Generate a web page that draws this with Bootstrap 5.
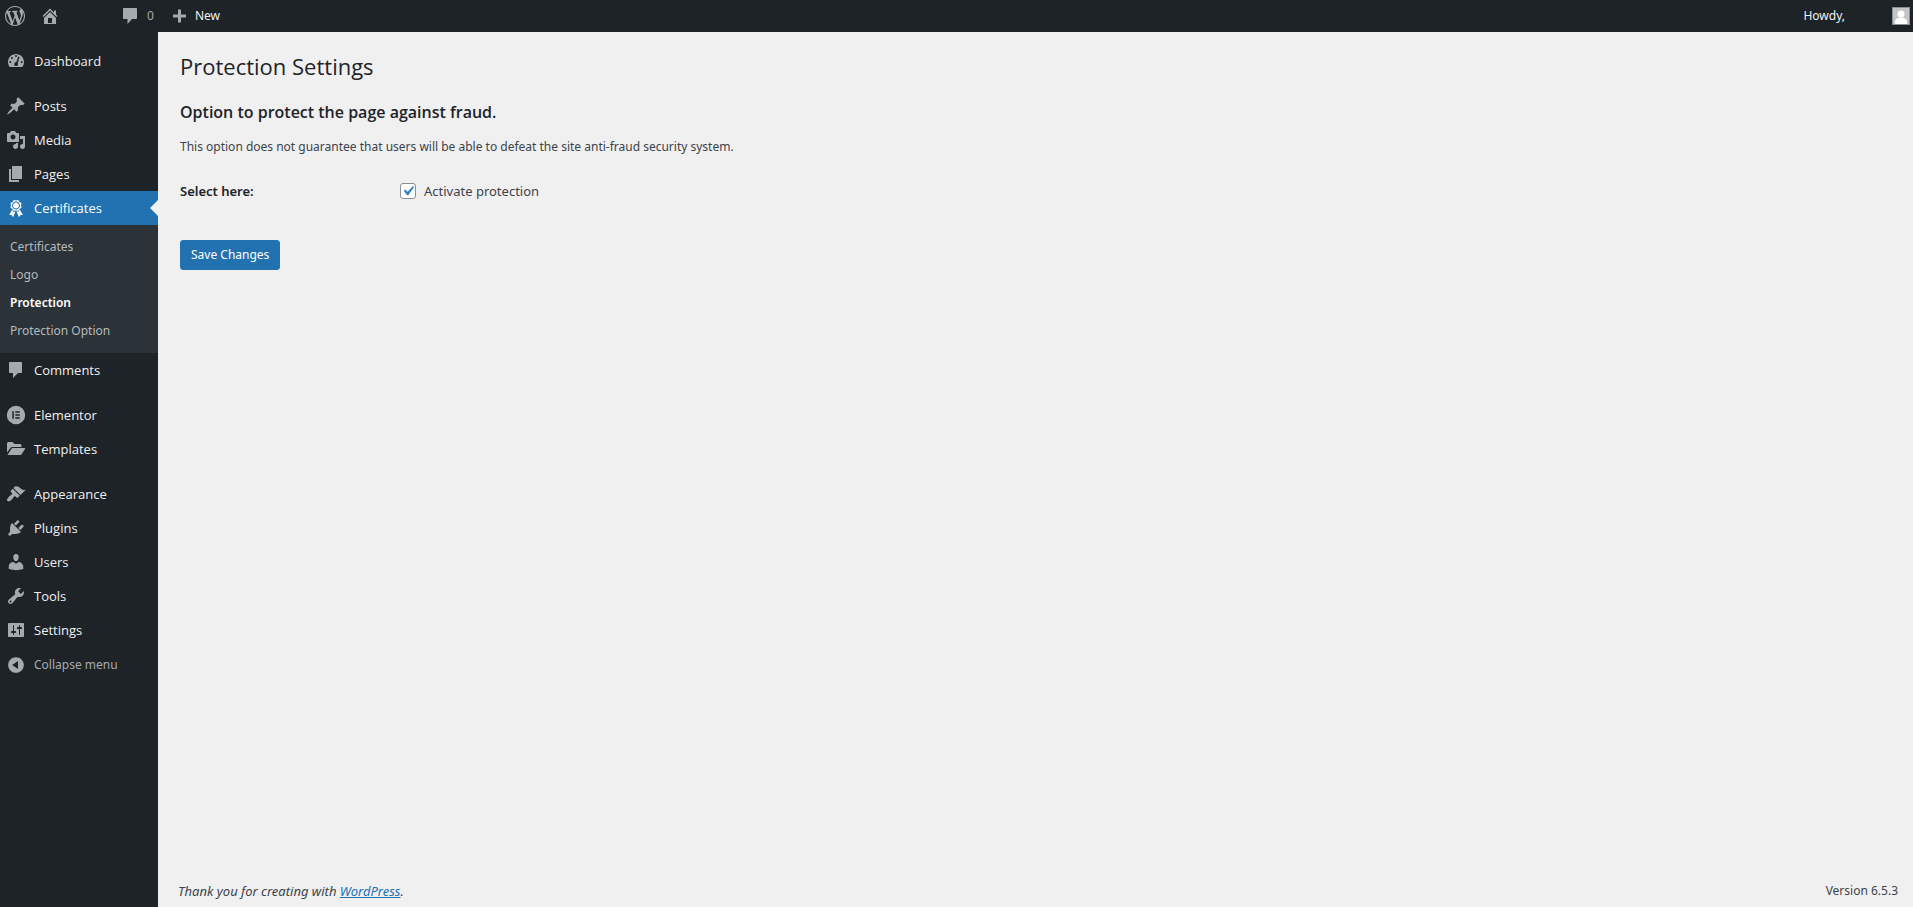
<!DOCTYPE html>
<html lang="en">
<head>
<meta charset="utf-8">
<meta name="viewport" content="width=device-width, initial-scale=1">
<title>Protection Settings</title>
<link href="https://cdn.jsdelivr.net/npm/bootstrap@5.3.0/dist/css/bootstrap.min.css" rel="stylesheet">
<style>
  body { background: #f0f0f1; color: #3c434a; font: 12px/18px "Noto Sans", "Open Sans", sans-serif; }
  a { color: #2271b1; }
  h1, h2, .sidemenu { font-family: "Open Sans", "Noto Sans", sans-serif; }
  .ico { width: 20px; height: 20px; fill: #a7aaad; flex: none; }

  /* Top toolbar */
  .adminbar { height: 32px; background: #1d2327; font-size: 12px; color: #f0f0f1; padding-left: 5px; }
  .adminbar a { color: inherit; text-decoration: none; display: flex; align-items: center; height: 32px; }
  .adminbar .site { margin-left: 15px; }
  .adminbar .replies { margin-left: 60px; gap: 7px; color: #a7aaad; }
  .adminbar .create { margin-left: 15px; gap: 6px; }
  .adminbar .account { gap: 47px; padding-right: 3px; }
  .avatar { width: 18px; height: 18px; background: #c3c4c7; border: 1px solid #8c8f94; }

  /* Side menu */
  .sidemenu { width: 158px; flex: none; background: #1d2327; padding-top: 12px; font-size: 13px; }
  .sidemenu .nav-link { display: flex; align-items: center; gap: 8px; width: 100%; height: 34px; padding: 0 0 0 6px; color: #f0f0f1; border: 0; background: none; text-align: left; }
  .sidemenu .gap-above { margin-top: 11px; }
  .sidemenu .nav-link.current { background: #2271b1; color: #fff; position: relative; }
  .sidemenu .nav-link.current .ico { fill: #fff; }
  .sidemenu .nav-link.current::after { content: ""; position: absolute; right: 0; top: 9px; border: 8px solid transparent; border-right-color: #f0f0f1; }
  .sidemenu .collapse-menu { color: #a7aaad; font: 12px/18px "Noto Sans", "Open Sans", sans-serif; height: 36px; }
  .submenu { background: #2c3338; padding: 8px 0; font: 12px/18px "Noto Sans", "Open Sans", sans-serif; }
  .submenu a { display: block; height: 28px; line-height: 28px; padding-left: 10px; color: #b4b9be; text-decoration: none; }
  .submenu a.chosen { color: #fff; font-weight: 600; }

  /* Settings form */
  .content { padding: 20px 15px 7px 20px; }
  main { padding-left: 2px; }
  h1 { font-size: 22px; line-height: 28px; font-weight: 400; color: #1d2327; margin: 0 0 20px; }
  h2 { font-size: 16px; line-height: 24px; font-weight: 600; color: #1d2327; margin: 0 0 14px; }
  .field-name { width: 220px; font-size: 13px; font-weight: 600; color: #1d2327; }
  .settings-row { margin-top: 26px; }
  .form-check-input { width: 16px; height: 16px; margin: 0; border: 1px solid #8c8f94; border-radius: 4px; background-color: #fff; }
  .form-check-input:checked { background-color: #fff; border-color: #8c8f94; background-size: 20px; background-image: url("data:image/svg+xml,%3Csvg xmlns='http://www.w3.org/2000/svg' viewBox='0 0 20 20'%3E%3Cpath d='M14.83 4.89l1.34.94-5.81 8.38H9.02L5.78 9.67l1.34-1.25 2.57 2.4z' fill='%233582c4'/%3E%3C/svg%3E"); }
  .check-label { font-size: 13px; }
  .btn-save { --bs-btn-bg: #2271b1; --bs-btn-border-color: #2271b1; margin-top: 40px; height: 30px; padding: 0 10px; font-size: 12px; line-height: 28px; border-radius: 3px; }
  .thanks { font-size: 13px; font-style: italic; }
</style>
</head>
<body>
<div class="d-flex flex-column min-vh-100">
  <header class="adminbar d-flex align-items-center">
    <a href="#" aria-label="About WordPress"><svg class="ico" viewBox="0 0 20 20"><path d="M20 10c0-5.51-4.49-10-10-10C4.48 0 0 4.49 0 10c0 5.52 4.48 10 10 10 5.51 0 10-4.48 10-10zM7.78 15.37L4.37 6.22c.55-.02 1.17-.08 1.17-.08.5-.06.44-1.13-.06-1.11 0 0-1.45.11-2.37.11-.18 0-.37 0-.58-.01C4.12 2.69 6.87 1.11 10 1.11c2.33 0 4.45.87 6.05 2.34-.68-.11-1.65.39-1.65 1.58 0 .74.45 1.36.9 2.1.35.61.55 1.36.55 2.46 0 1.49-1.4 5-1.4 5l-3.03-8.37c.54-.02.82-.17.82-.17.5-.05.44-1.25-.06-1.22 0 0-1.44.12-2.38.12-.87 0-2.33-.12-2.33-.12-.5-.03-.56 1.2-.06 1.22l.92.08 1.26 3.41zM17.41 10c.24-.64.74-1.87.43-4.25.7 1.29 1.05 2.71 1.05 4.25 0 3.29-1.73 6.24-4.4 7.78.97-2.59 1.94-5.2 2.92-7.78zM6.1 18.09C3.12 16.65 1.11 13.53 1.11 10c0-1.3.23-2.48.72-3.59C3.25 10.3 4.67 14.2 6.1 18.09zm4.03-6.63l2.58 6.98c-.86.29-1.76.45-2.71.45-.79 0-1.57-.11-2.29-.33.81-2.38 1.62-4.74 2.42-7.1z"/></svg></a>
    <a href="#" class="site" aria-label="Visit site"><svg class="ico" viewBox="0 0 20 20"><path fill-rule="evenodd" d="M16 8.5l1.53 1.53-1.06 1.06L10 4.6l-6.47 6.49-1.06-1.06L10 2.5l4 4v-2h2v4zm-6-2.46l6 5.99V18H4v-5.97zM12 17v-5H8v5h4z"/></svg></a>
    <a href="#" class="replies"><svg class="ico" viewBox="0 0 20 20"><path d="M4 2h12c.7 0 1 .4 1 1v9c0 .7-.4 1-1 1h-4l-4.500 5v-5H4c-.7 0-1-.4-1-1V3c0-.7.4-1 1-1z"/></svg>0</a>
    <a href="#" class="create"><svg class="ico" viewBox="0 0 20 20"><path d="M17 8.500v3h-5v5H9v-5H4v-3h5v-5h3v5z"/></svg>New</a>
    <a href="#" class="account ms-auto">Howdy,
      <svg class="avatar" viewBox="0 0 16 16"><circle cx="8" cy="6" r="3.500" fill="#fff"/><path d="M2 16v-2c0-3 2.500-4.500 6-4.500s6 1.500 6 4.500v2z" fill="#fff"/></svg></a>
  </header>

  <div class="d-flex flex-grow-1">
    <nav class="sidemenu" aria-label="Main menu">
      <a href="#" class="nav-link"><svg class="ico" viewBox="0 0 20 20"><path fill-rule="evenodd" d="M3.760 16h12.480c1.090-1.370 1.760-3.100 1.760-5 0-4.420-3.580-8-8-8s-8 3.580-8 8c0 1.900.66 3.630 1.760 5zM9 5a1 1 0 1 0 2 0a1 1 0 1 0-2 0zM5 6.900a1 1 0 1 0 2 0a1 1 0 1 0-2 0zM3.300 11a1 1 0 1 0 2 0a1 1 0 1 0-2 0zM14.700 11a1 1 0 1 0 2 0a1 1 0 1 0-2 0zM12.300 5.500l1.300.5-1.900 6c.9 1.300.2 3-1.600 3s-2.500-1.900-1.500-3 1.700-1 1.700-1z"/></svg>Dashboard</a>
      <a href="#" class="nav-link gap-above"><svg class="ico" viewBox="0 0 20 20"><path d="M10.440 3.020l1.820-1.820 6.360 6.350-1.830 1.820c-1.050-.68-2.480-.57-3.410.36l-.75.75c-.92.93-1.040 2.350-.35 3.410l-1.830 1.820-2.410-2.410-2.800 2.790c-.42.42-3.380 2.710-3.800 2.290s1.860-3.390 2.280-3.810l2.790-2.790L4.100 9.360l1.830-1.820c1.050.69 2.480.57 3.400-.36l.75-.75c.93-.92 1.050-2.350.36-3.410z"/></svg>Posts</a>
      <a href="#" class="nav-link"><svg class="ico" viewBox="0 0 20 20"><path fill-rule="evenodd" d="M13 11V4c0-.55-.45-1-1-1h-1.670L9 1H5L3.670 3H2c-.55 0-1 .45-1 1v7c0 .55.45 1 1 1h10c.55 0 1-.45 1-1zM7 4.500c1.380 0 2.500 1.120 2.500 2.500S8.380 9.500 7 9.500 4.500 8.380 4.500 7 5.620 4.500 7 4.500zM14 6h5v10.500c0 1.380-1.120 2.500-2.500 2.500S14 17.880 14 16.500s1.120-2.500 2.500-2.500c.17 0 .34.02.5.050V9h-3V6zm-4 8.050V13h2v3.500c0 1.380-1.120 2.500-2.500 2.500S7 17.880 7 16.500 8.120 14 9.500 14c.17 0 .34.02.5.050z"/></svg>Media</a>
      <a href="#" class="nav-link"><svg class="ico" viewBox="0 0 20 20"><path d="M6 15V2h10v13H6zm-1 1h8v2H3V5h2v11z"/></svg>Pages</a>
      <a href="#" class="nav-link current" aria-current="true"><svg class="ico" viewBox="0 0 20 20"><path fill-rule="evenodd" d="M4.460 5.160L5 7.460l-.54 2.290 2.010 1.240L7.700 13l2.300-.54 2.300.54 1.230-2.010 2.010-1.240L15 7.460l.54-2.300-2-1.240-1.240-2.010-2.300.55-2.290-.54-1.250 2zm5.550 6.340c-2.210 0-4-1.790-4-4s1.790-4 4-4c2.200 0 4 1.790 4 4s-1.800 4-4 4zm-.02-1C8.330 10.500 7 9.160 7 7.500c0-1.650 1.330-3 2.990-3S13 5.850 13 7.500c0 1.660-1.350 3-3.010 3zm3.840 1.100l-1.280 2.240-2.080-.47L13 19.200l1.400-2.200h2.500zm-7.700.07l1.250 2.250 2.130-.51L7 19.200 5.600 17H3.100z"/></svg>Certificates</a>
      <div class="submenu">
        <a href="#">Certificates</a>
        <a href="#">Logo</a>
        <a href="#" class="chosen" aria-current="page">Protection</a>
        <a href="#">Protection Option</a>
      </div>
      <a href="#" class="nav-link"><svg class="ico" viewBox="0 0 20 20"><path d="M4 2h11c.7 0 1 .4 1 1v9c0 .7-.4 1-1 1h-3l-5 5v-5H4c-.7 0-1-.4-1-1V3c0-.7.4-1 1-1z"/></svg>Comments</a>
      <a href="#" class="nav-link gap-above"><svg class="ico" viewBox="0 0 20 20"><path fill-rule="evenodd" d="M10 .8a9.200 9.200 0 1 0 0 18.400a9.200 9.200 0 1 0 0-18.400zM6.300 6.200h1.500v7.600H6.300zM9.300 6.200h4.500v1.500H9.300zM9.300 9.250h4.500v1.500H9.300zM9.300 12.300h4.500v1.500H9.300z"/></svg>Elementor</a>
      <a href="#" class="nav-link"><svg class="ico" viewBox="0 0 20 20"><path d="M1 13.500V4.500C1 3.600 1.600 3 2.500 3h4l2 2H14c.9 0 1.500.6 1.500 1.500V8H6.500C5.500 8 4.800 8.400 4.200 9.300zM1.500 16l3.800-6c.4-.7.8-1 1.500-1h11.700c.7 0 .9.5.5 1.100l-3.200 5c-.4.6-.9.9-1.600.9z"/></svg>Templates</a>
      <a href="#" class="nav-link gap-above"><svg class="ico" viewBox="0 0 20 20"><path d="M14.480 11.060L7.410 3.990l1.500-1.500c.5-.56 2.300-.47 3.510.32 1.210.8 1.430 1.280 2.910 2.100 1.180.64 2.450 1.260 4.450.85zm-.71.71L6.700 4.700 4.930 6.470c-.39.39-.39 1.020 0 1.410l1.060 1.060c.39.39.39 1.030 0 1.420-.6.6-1.430 1.110-2.210 1.690-.35.26-.7.53-1.010.84C1.430 14.230.4 16.080 1.400 17.070c.99 1 2.840-.03 4.180-1.360.31-.31.58-.66.85-1.020.57-.78 1.080-1.610 1.690-2.210.39-.39 1.020-.39 1.410 0l1.060 1.060c.39.39 1.020.39 1.410 0z"/></svg>Appearance</a>
      <a href="#" class="nav-link"><svg class="ico" viewBox="0 0 20 20"><path d="M13.110 4.360L9.870 7.600 8 5.730l3.240-3.240c.35-.34 1.050-.2 1.560.32.52.51.66 1.210.31 1.550zm-8 1.770l.91-1.120 9.010 9.010-1.190.84c-.71.71-2.630 1.160-3.820 1.160H6.140L4.900 17.260c-.59.59-1.540.59-2.120 0-.59-.58-.59-1.530 0-2.120l1.240-1.240v-3.880c0-1.130.4-3.190 1.090-3.890zm7.260 3.970l3.240-3.240c.34-.35 1.040-.21 1.550.31.52.51.66 1.210.31 1.550l-3.240 3.250z"/></svg>Plugins</a>
      <a href="#" class="nav-link"><svg class="ico" viewBox="0 0 20 20"><path d="M10 9.250c-2.270 0-2.730-3.440-2.730-3.440C7 4.020 7.820 2 9.970 2c2.160 0 2.980 2.020 2.710 3.810 0 0-.41 3.440-2.680 3.440zm0 2.570L12.720 10c2.390 0 4.520 2.330 4.520 4.530v2.490s-3.650 1.130-7.240 1.130c-3.650 0-7.240-1.130-7.240-1.130v-2.490c0-2.250 1.940-4.480 4.470-4.480z"/></svg>Users</a>
      <a href="#" class="nav-link"><svg class="ico" viewBox="0 0 20 20"><path fill-rule="evenodd" d="M16.680 9.770c-1.340 1.340-3.300 1.670-4.950.99l-5.410 6.520c-.99.99-2.590.99-3.580 0s-.99-2.590 0-3.570l6.520-5.420c-.68-1.650-.35-3.610.99-4.950 1.280-1.280 3.120-1.620 4.720-1.060l-2.890 2.890 2.820 2.820 2.860-2.870c.53 1.580.18 3.390-1.080 4.650zM3.810 16.210c.4.39 1.040.39 1.430 0 .4-.4.4-1.040 0-1.430-.39-.4-1.030-.4-1.430 0-.39.39-.39 1.030 0 1.430z"/></svg>Tools</a>
      <a href="#" class="nav-link"><svg class="ico" viewBox="0 0 20 20"><path fill-rule="evenodd" d="M18 16V4c0-.55-.45-1-1-1H3c-.55 0-1 .45-1 1v12c0 .55.45 1 1 1h14c.55 0 1-.45 1-1zM8 11h1c.55 0 1 .45 1 1s-.45 1-1 1H8v1.500c0 .28-.22.5-.5.5s-.5-.22-.5-.5V13H6c-.55 0-1-.45-1-1s.45-1 1-1h1V5.500c0-.28.22-.5.5-.5s.5.22.5.5V11zm5-2h-1c-.55 0-1-.45-1-1s.45-1 1-1h1V5.500c0-.28.22-.5.5-.5s.5.22.5.5V7h1c.55 0 1 .45 1 1s-.45 1-1 1h-1v5.500c0 .28-.22.5-.5.5s-.5-.22-.5-.5V9z"/></svg>Settings</a>
      <button type="button" class="nav-link collapse-menu"><svg class="ico" viewBox="0 0 20 20"><path fill-rule="evenodd" d="M10 2.160c4.330 0 7.840 3.510 7.840 7.840s-3.510 7.840-7.840 7.840S2.160 14.330 2.160 10 5.710 2.160 10 2.160zm2 11.720V6.120L6.180 9.970z"/></svg>Collapse menu</button>
    </nav>

    <div class="content d-flex flex-column flex-grow-1">
      <main class="flex-grow-1">
        <h1>Protection Settings</h1>
        <h2>Option to protect the page against fraud.</h2>
        <p class="m-0">This option does not guarantee that users will be able to defeat the site anti-fraud security system.</p>
        <form>
          <div class="settings-row d-flex align-items-center">
            <div class="field-name">Select here:</div>
            <div class="d-flex align-items-center gap-2">
              <input class="form-check-input" type="checkbox" id="activate" checked>
              <label class="check-label" for="activate">Activate protection</label>
            </div>
          </div>
          <button type="button" class="btn btn-primary btn-save">Save Changes</button>
        </form>
      </main>
      <footer class="d-flex justify-content-between">
        <span class="thanks">Thank you for creating with <a href="#">WordPress</a>.</span>
        <span>Version 6.5.3</span>
      </footer>
    </div>
  </div>
</div>
<script src="https://cdn.jsdelivr.net/npm/bootstrap@5.3.0/dist/js/bootstrap.bundle.min.js"></script>
</body>
</html>
